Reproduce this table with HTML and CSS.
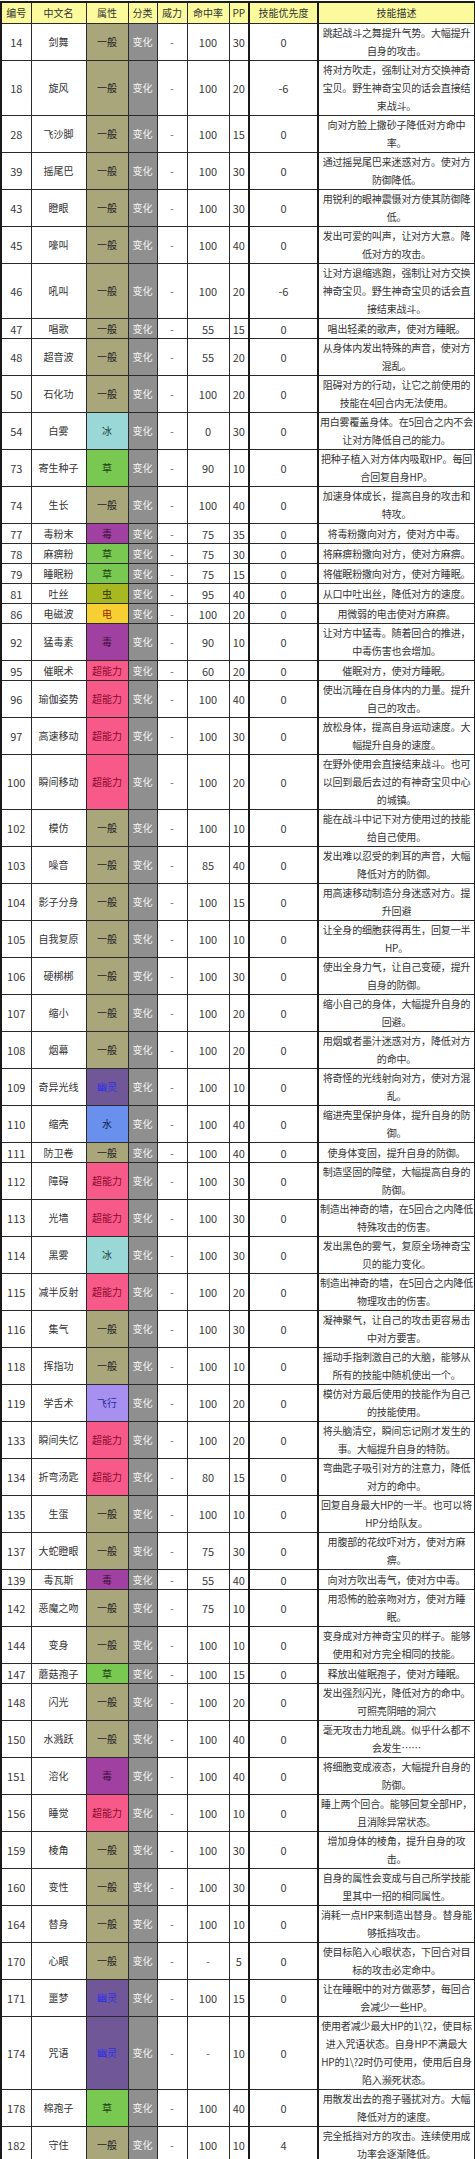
FILE: index.html
```html
<!DOCTYPE html>
<html lang="zh-CN">
<head>
<meta charset="utf-8">
<title>变化技能表</title>
<link rel="stylesheet" href="styles.css">
</head>
<body>
<table class="moves">
<colgroup>
<col class="w-num"><col class="w-name"><col class="w-type"><col class="w-cat"><col class="w-pow"><col class="w-acc"><col class="w-pp"><col class="w-pri"><col class="w-desc">
</colgroup>
<thead>
<tr><th>编号</th><th>中文名</th><th>属性</th><th>分类</th><th>威力</th><th>命中率</th><th class="pp">PP</th><th class="pri">技能优先度</th><th>技能描述</th></tr>
</thead>
<tbody>
<tr><td class="num">14</td><td class="name">剑舞</td><td class="type t-normal">一般</td><td class="cat">变化</td><td class="pow">-</td><td class="num">100</td><td class="num pp">30</td><td class="num pri">0</td><td class="desc">跳起战斗之舞提升气势。大幅提升<br>自身的攻击。</td></tr>
<tr><td class="num">18</td><td class="name">旋风</td><td class="type t-normal">一般</td><td class="cat">变化</td><td class="pow">-</td><td class="num">100</td><td class="num pp">20</td><td class="num pri">-6</td><td class="desc">将对方吹走，强制让对方交换神奇<br>宝贝。野生神奇宝贝的话会直接结<br>束战斗。</td></tr>
<tr><td class="num">28</td><td class="name">飞沙脚</td><td class="type t-normal">一般</td><td class="cat">变化</td><td class="pow">-</td><td class="num">100</td><td class="num pp">15</td><td class="num pri">0</td><td class="desc">向对方脸上撒砂子降低对方命中<br>率。</td></tr>
<tr><td class="num">39</td><td class="name">摇尾巴</td><td class="type t-normal">一般</td><td class="cat">变化</td><td class="pow">-</td><td class="num">100</td><td class="num pp">30</td><td class="num pri">0</td><td class="desc">通过摇晃尾巴来迷惑对方。使对方<br>防御降低。</td></tr>
<tr><td class="num">43</td><td class="name">瞪眼</td><td class="type t-normal">一般</td><td class="cat">变化</td><td class="pow">-</td><td class="num">100</td><td class="num pp">30</td><td class="num pri">0</td><td class="desc">用锐利的眼神震慑对方使其防御降<br>低。</td></tr>
<tr><td class="num">45</td><td class="name">嚎叫</td><td class="type t-normal">一般</td><td class="cat">变化</td><td class="pow">-</td><td class="num">100</td><td class="num pp">40</td><td class="num pri">0</td><td class="desc">发出可爱的叫声，让对方大意。降<br>低对方的攻击。</td></tr>
<tr><td class="num">46</td><td class="name">吼叫</td><td class="type t-normal">一般</td><td class="cat">变化</td><td class="pow">-</td><td class="num">100</td><td class="num pp">20</td><td class="num pri">-6</td><td class="desc">让对方退缩逃跑，强制让对方交换<br>神奇宝贝。野生神奇宝贝的话会直<br>接结束战斗。</td></tr>
<tr class="one"><td class="num">47</td><td class="name">唱歌</td><td class="type t-normal">一般</td><td class="cat">变化</td><td class="pow">-</td><td class="num">55</td><td class="num pp">15</td><td class="num pri">0</td><td class="desc">唱出轻柔的歌声，使对方睡眠。</td></tr>
<tr><td class="num">48</td><td class="name">超音波</td><td class="type t-normal">一般</td><td class="cat">变化</td><td class="pow">-</td><td class="num">55</td><td class="num pp">20</td><td class="num pri">0</td><td class="desc">从身体内发出特殊的声音，使对方<br>混乱。</td></tr>
<tr><td class="num">50</td><td class="name">石化功</td><td class="type t-normal">一般</td><td class="cat">变化</td><td class="pow">-</td><td class="num">100</td><td class="num pp">20</td><td class="num pri">0</td><td class="desc">阻碍对方的行动，让它之前使用的<br>技能在4回合内无法使用。</td></tr>
<tr><td class="num">54</td><td class="name">白雾</td><td class="type t-ice">冰</td><td class="cat">变化</td><td class="pow">-</td><td class="num">0</td><td class="num pp">30</td><td class="num pri">0</td><td class="desc">用白雾覆盖身体。在5回合之内不会<br>让对方降低自己的能力。</td></tr>
<tr><td class="num">73</td><td class="name">寄生种子</td><td class="type t-grass">草</td><td class="cat">变化</td><td class="pow">-</td><td class="num">90</td><td class="num pp">10</td><td class="num pri">0</td><td class="desc">把种子植入对方体内吸取HP。每回<br>合回复自身HP。</td></tr>
<tr><td class="num">74</td><td class="name">生长</td><td class="type t-normal">一般</td><td class="cat">变化</td><td class="pow">-</td><td class="num">100</td><td class="num pp">40</td><td class="num pri">0</td><td class="desc">加速身体成长，提高自身的攻击和<br>特攻。</td></tr>
<tr class="one"><td class="num">77</td><td class="name">毒粉末</td><td class="type t-poison">毒</td><td class="cat">变化</td><td class="pow">-</td><td class="num">75</td><td class="num pp">35</td><td class="num pri">0</td><td class="desc">将毒粉撒向对方，使对方中毒。</td></tr>
<tr class="one"><td class="num">78</td><td class="name">麻痹粉</td><td class="type t-grass">草</td><td class="cat">变化</td><td class="pow">-</td><td class="num">75</td><td class="num pp">30</td><td class="num pri">0</td><td class="desc">将麻痹粉撒向对方，使对方麻痹。</td></tr>
<tr class="one"><td class="num">79</td><td class="name">睡眠粉</td><td class="type t-grass">草</td><td class="cat">变化</td><td class="pow">-</td><td class="num">75</td><td class="num pp">15</td><td class="num pri">0</td><td class="desc">将催眠粉撒向对方，使对方睡眠。</td></tr>
<tr class="one"><td class="num">81</td><td class="name">吐丝</td><td class="type t-bug">虫</td><td class="cat">变化</td><td class="pow">-</td><td class="num">95</td><td class="num pp">40</td><td class="num pri">0</td><td class="desc">从口中吐出丝，降低对方的速度。</td></tr>
<tr class="one"><td class="num">86</td><td class="name">电磁波</td><td class="type t-elec">电</td><td class="cat">变化</td><td class="pow">-</td><td class="num">100</td><td class="num pp">20</td><td class="num pri">0</td><td class="desc">用微弱的电击使对方麻痹。</td></tr>
<tr><td class="num">92</td><td class="name">猛毒素</td><td class="type t-poison">毒</td><td class="cat">变化</td><td class="pow">-</td><td class="num">90</td><td class="num pp">10</td><td class="num pri">0</td><td class="desc">让对方中猛毒。随着回合的推进，<br>中毒伤害也会增加。</td></tr>
<tr class="one"><td class="num">95</td><td class="name">催眠术</td><td class="type t-psy">超能力</td><td class="cat">变化</td><td class="pow">-</td><td class="num">60</td><td class="num pp">20</td><td class="num pri">0</td><td class="desc">催眠对方，使对方睡眠。</td></tr>
<tr><td class="num">96</td><td class="name">瑜伽姿势</td><td class="type t-psy">超能力</td><td class="cat">变化</td><td class="pow">-</td><td class="num">100</td><td class="num pp">40</td><td class="num pri">0</td><td class="desc">使出沉睡在自身体内的力量。提升<br>自己的攻击。</td></tr>
<tr><td class="num">97</td><td class="name">高速移动</td><td class="type t-psy">超能力</td><td class="cat">变化</td><td class="pow">-</td><td class="num">100</td><td class="num pp">30</td><td class="num pri">0</td><td class="desc">放松身体，提高自身运动速度。大<br>幅提升自身的速度。</td></tr>
<tr><td class="num">100</td><td class="name">瞬间移动</td><td class="type t-psy">超能力</td><td class="cat">变化</td><td class="pow">-</td><td class="num">100</td><td class="num pp">20</td><td class="num pri">0</td><td class="desc">在野外使用会直接结束战斗。也可<br>以回到最后去过的有神奇宝贝中心<br>的城镇。</td></tr>
<tr><td class="num">102</td><td class="name">模仿</td><td class="type t-normal">一般</td><td class="cat">变化</td><td class="pow">-</td><td class="num">100</td><td class="num pp">10</td><td class="num pri">0</td><td class="desc">能在战斗中记下对方使用过的技能<br>给自己使用。</td></tr>
<tr><td class="num">103</td><td class="name">噪音</td><td class="type t-normal">一般</td><td class="cat">变化</td><td class="pow">-</td><td class="num">85</td><td class="num pp">40</td><td class="num pri">0</td><td class="desc">发出难以忍受的刺耳的声音，大幅<br>降低对方的防御。</td></tr>
<tr><td class="num">104</td><td class="name">影子分身</td><td class="type t-normal">一般</td><td class="cat">变化</td><td class="pow">-</td><td class="num">100</td><td class="num pp">15</td><td class="num pri">0</td><td class="desc">用高速移动制造分身迷惑对方。提<br>升回避</td></tr>
<tr><td class="num">105</td><td class="name">自我复原</td><td class="type t-normal">一般</td><td class="cat">变化</td><td class="pow">-</td><td class="num">100</td><td class="num pp">10</td><td class="num pri">0</td><td class="desc">让全身的细胞获得再生，回复一半<br>HP。</td></tr>
<tr><td class="num">106</td><td class="name">硬梆梆</td><td class="type t-normal">一般</td><td class="cat">变化</td><td class="pow">-</td><td class="num">100</td><td class="num pp">30</td><td class="num pri">0</td><td class="desc">使出全身力气，让自己变硬，提升<br>自身的防御。</td></tr>
<tr><td class="num">107</td><td class="name">缩小</td><td class="type t-normal">一般</td><td class="cat">变化</td><td class="pow">-</td><td class="num">100</td><td class="num pp">20</td><td class="num pri">0</td><td class="desc">缩小自己的身体，大幅提升自身的<br>回避。</td></tr>
<tr><td class="num">108</td><td class="name">烟幕</td><td class="type t-normal">一般</td><td class="cat">变化</td><td class="pow">-</td><td class="num">100</td><td class="num pp">20</td><td class="num pri">0</td><td class="desc">用烟或者墨汁迷惑对方，降低对方<br>的命中。</td></tr>
<tr><td class="num">109</td><td class="name">奇异光线</td><td class="type t-ghost">幽灵</td><td class="cat">变化</td><td class="pow">-</td><td class="num">100</td><td class="num pp">10</td><td class="num pri">0</td><td class="desc">将奇怪的光线射向对方，使对方混<br>乱。</td></tr>
<tr><td class="num">110</td><td class="name">缩壳</td><td class="type t-water">水</td><td class="cat">变化</td><td class="pow">-</td><td class="num">100</td><td class="num pp">40</td><td class="num pri">0</td><td class="desc">缩进壳里保护身体，提升自身的防<br>御。</td></tr>
<tr class="one"><td class="num">111</td><td class="name">防卫卷</td><td class="type t-normal">一般</td><td class="cat">变化</td><td class="pow">-</td><td class="num">100</td><td class="num pp">40</td><td class="num pri">0</td><td class="desc">使身体变固，提升自身的防御。</td></tr>
<tr><td class="num">112</td><td class="name">障碍</td><td class="type t-psy">超能力</td><td class="cat">变化</td><td class="pow">-</td><td class="num">100</td><td class="num pp">30</td><td class="num pri">0</td><td class="desc">制造坚固的障壁，大幅提高自身的<br>防御。</td></tr>
<tr><td class="num">113</td><td class="name">光墙</td><td class="type t-psy">超能力</td><td class="cat">变化</td><td class="pow">-</td><td class="num">100</td><td class="num pp">30</td><td class="num pri">0</td><td class="desc">制造出神奇的墙，在5回合之内降低<br>特殊攻击的伤害。</td></tr>
<tr><td class="num">114</td><td class="name">黑雾</td><td class="type t-ice">冰</td><td class="cat">变化</td><td class="pow">-</td><td class="num">100</td><td class="num pp">30</td><td class="num pri">0</td><td class="desc">发出黑色的雾气，复原全场神奇宝<br>贝的能力变化。</td></tr>
<tr><td class="num">115</td><td class="name">减半反射</td><td class="type t-psy">超能力</td><td class="cat">变化</td><td class="pow">-</td><td class="num">100</td><td class="num pp">20</td><td class="num pri">0</td><td class="desc">制造出神奇的墙，在5回合之内降低<br>物理攻击的伤害。</td></tr>
<tr><td class="num">116</td><td class="name">集气</td><td class="type t-normal">一般</td><td class="cat">变化</td><td class="pow">-</td><td class="num">100</td><td class="num pp">30</td><td class="num pri">0</td><td class="desc">凝神聚气，让自己的攻击更容易击<br>中对方要害。</td></tr>
<tr><td class="num">118</td><td class="name">挥指功</td><td class="type t-normal">一般</td><td class="cat">变化</td><td class="pow">-</td><td class="num">100</td><td class="num pp">10</td><td class="num pri">0</td><td class="desc">摇动手指刺激自己的大脑，能够从<br>所有的技能中随机使出一个。</td></tr>
<tr><td class="num">119</td><td class="name">学舌术</td><td class="type t-fly">飞行</td><td class="cat">变化</td><td class="pow">-</td><td class="num">100</td><td class="num pp">20</td><td class="num pri">0</td><td class="desc">模仿对方最后使用的技能作为自己<br>的技能使用。</td></tr>
<tr><td class="num">133</td><td class="name">瞬间失忆</td><td class="type t-psy">超能力</td><td class="cat">变化</td><td class="pow">-</td><td class="num">100</td><td class="num pp">20</td><td class="num pri">0</td><td class="desc">将头脑清空，瞬间忘记刚才发生的<br>事。大幅提升自身的特防。</td></tr>
<tr><td class="num">134</td><td class="name">折弯汤匙</td><td class="type t-psy">超能力</td><td class="cat">变化</td><td class="pow">-</td><td class="num">80</td><td class="num pp">15</td><td class="num pri">0</td><td class="desc">弯曲匙子吸引对方的注意力，降低<br>对方的命中。</td></tr>
<tr><td class="num">135</td><td class="name">生蛋</td><td class="type t-normal">一般</td><td class="cat">变化</td><td class="pow">-</td><td class="num">100</td><td class="num pp">10</td><td class="num pri">0</td><td class="desc">回复自身最大HP的一半。也可以将<br>HP分给队友。</td></tr>
<tr><td class="num">137</td><td class="name">大蛇瞪眼</td><td class="type t-normal">一般</td><td class="cat">变化</td><td class="pow">-</td><td class="num">75</td><td class="num pp">30</td><td class="num pri">0</td><td class="desc">用腹部的花纹吓对方，使对方麻<br>痹。</td></tr>
<tr class="one"><td class="num">139</td><td class="name">毒瓦斯</td><td class="type t-poison">毒</td><td class="cat">变化</td><td class="pow">-</td><td class="num">55</td><td class="num pp">40</td><td class="num pri">0</td><td class="desc">向对方吹出毒气，使对方中毒。</td></tr>
<tr><td class="num">142</td><td class="name">恶魔之吻</td><td class="type t-normal">一般</td><td class="cat">变化</td><td class="pow">-</td><td class="num">75</td><td class="num pp">10</td><td class="num pri">0</td><td class="desc">用恐怖的脸亲吻对方，使对方睡<br>眠。</td></tr>
<tr><td class="num">144</td><td class="name">变身</td><td class="type t-normal">一般</td><td class="cat">变化</td><td class="pow">-</td><td class="num">100</td><td class="num pp">10</td><td class="num pri">0</td><td class="desc">变身成对方神奇宝贝的样子。能够<br>使用和对方完全相同的技能。</td></tr>
<tr class="one"><td class="num">147</td><td class="name">蘑菇孢子</td><td class="type t-grass">草</td><td class="cat">变化</td><td class="pow">-</td><td class="num">100</td><td class="num pp">15</td><td class="num pri">0</td><td class="desc">释放出催眠孢子，使对方睡眠。</td></tr>
<tr><td class="num">148</td><td class="name">闪光</td><td class="type t-normal">一般</td><td class="cat">变化</td><td class="pow">-</td><td class="num">100</td><td class="num pp">20</td><td class="num pri">0</td><td class="desc">发出强烈闪光，降低对方的命中。<br>可照亮阴暗的洞穴</td></tr>
<tr><td class="num">150</td><td class="name">水溅跃</td><td class="type t-normal">一般</td><td class="cat">变化</td><td class="pow">-</td><td class="num">100</td><td class="num pp">40</td><td class="num pri">0</td><td class="desc">毫无攻击力地乱跳。似乎什么都不<br>会发生……</td></tr>
<tr><td class="num">151</td><td class="name">溶化</td><td class="type t-poison">毒</td><td class="cat">变化</td><td class="pow">-</td><td class="num">100</td><td class="num pp">40</td><td class="num pri">0</td><td class="desc">将细胞变成液态，大幅提升自身的<br>防御。</td></tr>
<tr><td class="num">156</td><td class="name">睡觉</td><td class="type t-psy">超能力</td><td class="cat">变化</td><td class="pow">-</td><td class="num">100</td><td class="num pp">10</td><td class="num pri">0</td><td class="desc">睡上两个回合。能够回复全部HP，<br>且消除异常状态。</td></tr>
<tr><td class="num">159</td><td class="name">棱角</td><td class="type t-normal">一般</td><td class="cat">变化</td><td class="pow">-</td><td class="num">100</td><td class="num pp">30</td><td class="num pri">0</td><td class="desc">增加身体的棱角，提升自身的攻<br>击。</td></tr>
<tr><td class="num">160</td><td class="name">变性</td><td class="type t-normal">一般</td><td class="cat">变化</td><td class="pow">-</td><td class="num">100</td><td class="num pp">30</td><td class="num pri">0</td><td class="desc">自身的属性会变成与自己所学技能<br>里其中一招的相同属性。</td></tr>
<tr><td class="num">164</td><td class="name">替身</td><td class="type t-normal">一般</td><td class="cat">变化</td><td class="pow">-</td><td class="num">100</td><td class="num pp">10</td><td class="num pri">0</td><td class="desc">消耗一点HP来制造出替身。替身能<br>够抵挡攻击。</td></tr>
<tr><td class="num">170</td><td class="name">心眼</td><td class="type t-normal">一般</td><td class="cat">变化</td><td class="pow">-</td><td class="pow">-</td><td class="num pp">5</td><td class="num pri">0</td><td class="desc">使目标陷入心眼状态，下回合对目<br>标的攻击必定命中。</td></tr>
<tr><td class="num">171</td><td class="name">噩梦</td><td class="type t-ghost">幽灵</td><td class="cat">变化</td><td class="pow">-</td><td class="num">100</td><td class="num pp">15</td><td class="num pri">0</td><td class="desc">让在睡眠中的对方做恶梦，每回合<br>会减少一些HP。</td></tr>
<tr><td class="num">174</td><td class="name">咒语</td><td class="type t-ghost">幽灵</td><td class="cat">变化</td><td class="pow">-</td><td class="pow">-</td><td class="num pp">10</td><td class="num pri">0</td><td class="desc">使用者减少最大HP的1\?2，使目标<br>进入咒语状态。自身HP不满最大<br>HP的1\?2时仍可使用，使用后自身<br>陷入濒死状态。</td></tr>
<tr><td class="num">178</td><td class="name">棉孢子</td><td class="type t-grass">草</td><td class="cat">变化</td><td class="pow">-</td><td class="num">100</td><td class="num pp">40</td><td class="num pri">0</td><td class="desc">用散发出去的孢子骚扰对方。大幅<br>降低对方的速度。</td></tr>
<tr><td class="num">182</td><td class="name">守住</td><td class="type t-normal">一般</td><td class="cat">变化</td><td class="pow">-</td><td class="num">100</td><td class="num pp">10</td><td class="num pri">4</td><td class="desc">完全抵挡对方的攻击。连续使用成<br>功率会逐渐降低。</td></tr>
</tbody>
</table>
</body>
</html>
```
FILE: styles.css
```css
html, body {
  margin: 0;
  padding: 0;
  background: #ffffff;
}

body {
  font-family: "Noto Sans CJK SC", "Noto Sans", sans-serif;
  color: #333333;
}

.moves {
  table-layout: fixed;
  border-collapse: collapse;
  width: 474px;
  margin: 1px 0 0 0;
  border: 2px solid #1a1a1a;
}

.w-num { width: 30px; }
.w-name { width: 55px; }
.w-type { width: 42px; }
.w-cat { width: 29px; }
.w-pow { width: 30px; }
.w-acc { width: 42px; }
.w-pp { width: 20px; }
.w-pri { width: 69px; }
.w-desc { width: 157px; }

.moves th,
.moves td {
  border: 1px solid #2a2a2a;
  padding: 0;
  text-align: center;
  vertical-align: middle;
  line-height: 18px;
  overflow: hidden;
  white-space: nowrap;
}

.moves th {
  background: #fbfb9e;
  font-weight: normal;
  font-size: 10px;
  height: 20px;
  color: #333333;
}

.moves .pp {
  border-right: 2px solid #1a1a1a;
}

.moves .pri {
  border-right: 2px solid #1a1a1a;
}

.moves tr.one td {
  height: 19px;
}

.num {
  font-size: 11px;
  color: #3a3a3a;
}

.pow {
  font-size: 10px;
  color: #555555;
}

.name {
  font-size: 10px;
  color: #333333;
}

.type {
  font-size: 10px;
  color: #222222;
}

.cat {
  background: #8f8f8f;
  color: #f4f4f4;
  font-size: 10px;
}

.desc {
  font-size: 10px;
  letter-spacing: -0.15px;
  color: #333333;
}

.t-normal { background: #a9a67c; color: #1e1e1e; }
.t-ice { background: #9ad8d8; color: #224040; }
.t-grass { background: #79c852; color: #1c3d10; }
.t-poison { background: #a040a0; color: #3a103a; }
.t-bug { background: #a8b820; color: #2e3000; }
.t-elec { background: #f6cf32; color: #9a2a00; }
.t-psy { background: #f75a89; color: #8a0a2c; }
.t-ghost { background: #705898; color: #2c2cf0; }
.t-water { background: #6a90ee; color: #102050; }
.t-fly { background: #a890f0; color: #2a2a9a; }
```
